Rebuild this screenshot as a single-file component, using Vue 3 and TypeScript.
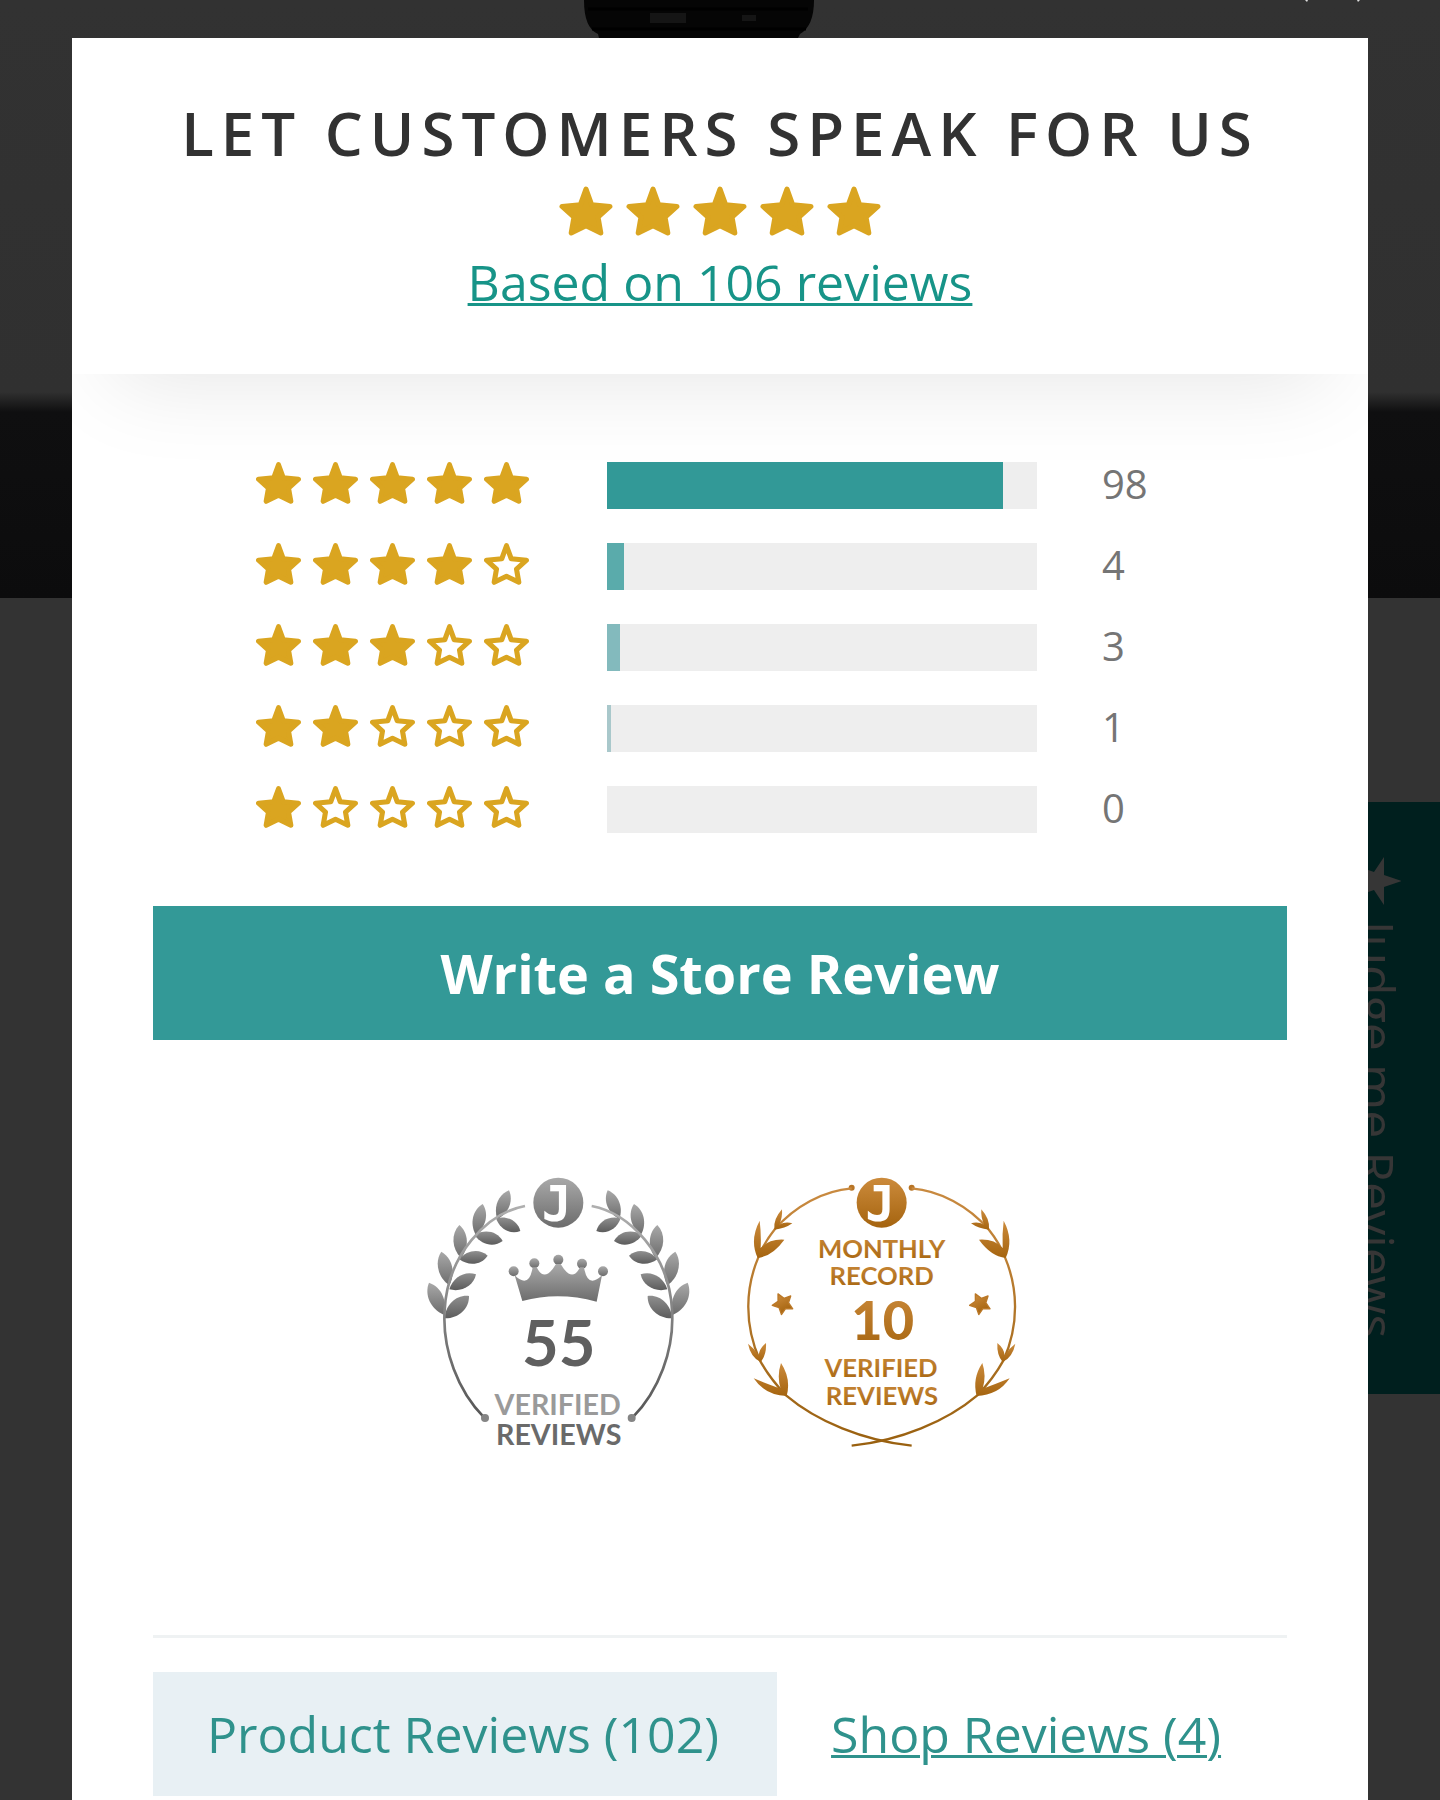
<script setup lang="ts">
interface RatingRow {
  stars: number
  count: number
  color: string
}

const rows: RatingRow[] = [
  { stars: 5, count: 98, color: '#329997' },
  { stars: 4, count: 4, color: '#5aabab' },
  { stars: 3, count: 3, color: '#83babd' },
  { stars: 2, count: 1, color: '#a9c8cb' },
  { stars: 1, count: 0, color: '#cfdfe1' },
]

const total = rows.reduce((sum, row) => sum + row.count, 0)
const percent = (count: number): number => Math.round((count / total) * 100)

const starPoints =
  '26.5,3 32,18.3 50,20 38.3,30.5 41,46 26.5,39 12,46 14.7,30.5 3,20 21,18.3'

type Leaf = [number, number, number, number]

// A pointed leaf that grows from (x1, y1) to (x2, y2).
function leafPath([x1, y1, x2, y2]: Leaf, fat: number): string {
  const dx = x2 - x1
  const dy = y2 - y1
  const at = (t: number, side: number) =>
    `${(x1 + dx * t - dy * side * fat).toFixed(1)} ${(y1 + dy * t + dx * side * fat).toFixed(1)}`
  return `M${x1} ${y1}C${at(0.3, 1)} ${at(0.75, 1)} ${x2} ${y2}C${at(0.75, -1)} ${at(0.3, -1)} ${x1} ${y1}Z`
}

const outerLeaves: Leaf[] = [
  [262, 177, 297, 91],
  [197, 224, 218, 132],
  [153, 294, 148, 195],
  [118, 376, 94, 275],
  [101, 464, 57, 368],
]
const innerLeaves: Leaf[] = [
  [258, 175, 331, 213],
  [194, 225, 278, 243],
  [148, 298, 233, 287],
  [118, 388, 198, 343],
  [104, 475, 177, 408],
]
const sprigs: string[] = [
  'M133 209Q129 178 156 148Q158 170 148 194Q166 184 187 190Q165 206 133 209Z',
  'M83 294Q58 240 89 182Q94 222 92 264Q118 236 163 239Q128 288 83 294Z',
  'M92 606Q62 592 54 551Q74 566 86 586Q88 565 108 549Q110 585 92 606Z',
  'M170 708Q105 706 71 655Q112 672 152 686Q140 648 153 609Q184 656 170 708Z',
]
</script>

<template>
  <div class="page">
    <div class="backdrop" aria-hidden="true">
      <div class="hero">
        <svg class="bottle" viewBox="0 0 230 38">
          <path d="M0 0H230Q230 26 216 34L214 38H15L14 34Q0 28 0 0Z" fill="#050505" />
          <path d="M66 13H102V23H66ZM158 15H172V21H158Z" fill="#151515" />
          <path d="M4 9H224M8 29H222" stroke="#000" stroke-width="3" />
        </svg>
        <svg class="flecks" viewBox="0 0 56 2">
          <path d="M1 0H4L3 2ZM53 0H56L54 2Z" fill="#ddd" />
        </svg>
      </div>
    </div>

    <a class="side-tab" href="#reviews">
      <svg class="side-star" viewBox="0 0 48 48" aria-hidden="true">
        <path d="M49 24 31 30 31 48 21 33 4 39 15 24 4 9 21 15 31 0 31 18Z" />
      </svg>
      <span>Judge me Reviews</span>
    </a>

    <main id="reviews" class="modal">
      <header class="summary">
        <h1>LET CUSTOMERS SPEAK FOR US</h1>
        <div class="stars big" role="img" aria-label="5 out of 5 stars">
          <svg v-for="n in 5" :key="n" class="star full" viewBox="0 0 53 49">
            <polygon :points="starPoints" />
          </svg>
        </div>
        <a class="based" href="#list">Based on {{ total }} reviews</a>
      </header>

      <div class="content">
        <div class="histogram">
          <div v-for="row in rows" :key="row.stars" class="row">
            <div class="stars" role="img" :aria-label="row.stars + ' stars'">
              <svg
                v-for="n in 5"
                :key="n"
                class="star"
                :class="{ full: n <= row.stars }"
                viewBox="0 0 53 49"
              >
                <polygon :points="starPoints" />
              </svg>
            </div>
            <div class="track">
              <div
                class="fill"
                :style="{ width: percent(row.count) + '%', background: row.color }"
              ></div>
            </div>
            <span class="count">{{ row.count }}</span>
          </div>
        </div>

        <button type="button" class="write">Write a Store Review</button>

        <div class="badges">
          <svg class="badge" viewBox="0 0 900 900">
            <defs>
              <linearGradient id="silver" x1="0" y1="0" x2="0" y2="1">
                <stop offset="0" stop-color="#a9a9a9" />
                <stop offset="1" stop-color="#6c6c6c" />
              </linearGradient>
              <linearGradient id="steel" x1="0" y1="0" x2="0" y2="1">
                <stop offset="0" stop-color="#8f8f8f" />
                <stop offset="1" stop-color="#5c5c5c" />
              </linearGradient>
              <linearGradient id="stem" gradientUnits="userSpaceOnUse" x1="0" y1="130" x2="0" y2="780">
                <stop offset="0" stop-color="#b0b0b0" />
                <stop offset="1" stop-color="#555" />
              </linearGradient>
              <g id="laurel">
                <path v-for="(leaf, i) in outerLeaves" :key="'o' + i" :d="leafPath(leaf, 0.27)" fill="url(#silver)" />
                <path v-for="(leaf, i) in innerLeaves" :key="'i' + i" :d="leafPath(leaf, 0.29)" fill="url(#steel)" />
                <path
                  d="M345 138C230 160 112 285 104 450C96 570 145 695 222 772"
                  fill="none"
                  stroke="url(#stem)"
                  stroke-width="8"
                />
                <circle cx="225" cy="774" r="12" fill="#858585" />
              </g>
            </defs>
            <use href="#laurel" />
            <use href="#laurel" transform="translate(890 0) scale(-1 1)" />
            <circle cx="445" cy="128" r="75" fill="url(#silver)" />
            <text class="logo" x="440" y="182">J</text>
            <g fill="url(#silver)">
              <circle cx="311" cy="334" r="15" />
              <circle cx="373" cy="310" r="15" />
              <circle cx="445" cy="299" r="15" />
              <circle cx="516" cy="311" r="15" />
              <circle cx="579" cy="334" r="15" />
              <path
                d="M337 423L314 346Q357 388 368 322H380Q404 370 438 312H452Q486 370 510 322H522Q533 388 576 346L560 425Q445 394 337 423Z"
              />
            </g>
            <text class="number" x="446" y="617" fill="#5f5f5f">55</text>
            <text class="label" x="443" y="765" fill="#9a9a9a">VERIFIED</text>
            <text class="label" x="446" y="854" fill="#6a6a6a">REVIEWS</text>
          </svg>

          <svg class="badge" viewBox="0 0 900 900">
            <defs>
              <linearGradient id="bronze" x1="0" y1="0" x2="0" y2="1">
                <stop offset="0" stop-color="#cc8b3c" />
                <stop offset="1" stop-color="#a5640f" />
              </linearGradient>
              <linearGradient id="wire" gradientUnits="userSpaceOnUse" x1="0" y1="80" x2="0" y2="860">
                <stop offset="0" stop-color="#c98a40" />
                <stop offset="1" stop-color="#99600f" />
              </linearGradient>
              <g id="wreath">
                <circle cx="365" cy="83" r="9" fill="#b87526" />
                <path
                  d="M365 85C280 92 195 138 135 207C112 236 96 262 85 292C48 380 40 490 90 602Q120 656 168 706C260 784 400 842 545 857"
                  fill="none"
                  stroke="url(#wire)"
                  stroke-width="7"
                />
                <path v-for="(sprig, i) in sprigs" :key="i" :d="sprig" fill="url(#bronze)" />
              </g>
              <path
                id="pip"
                d="M0-33 10-13 31-10 16 5 19 27 0 17-19 27-16 5-31-10-10-13Z"
                fill="url(#bronze)"
                stroke="#bb7827"
                stroke-width="4"
                stroke-linejoin="round"
              />
            </defs>
            <use href="#wreath" />
            <use href="#wreath" transform="translate(910 0) scale(-1 1)" />
            <use href="#pip" transform="translate(159 431) rotate(-27)" />
            <use href="#pip" transform="translate(751 431) rotate(-27)" />
            <circle cx="455" cy="128" r="75" fill="url(#bronze)" />
            <text class="logo" x="450" y="182">J</text>
            <text class="label small" x="455" y="293" fill="url(#bronze)">MONTHLY</text>
            <text class="label small" x="455" y="375" fill="url(#bronze)">RECORD</text>
            <text class="number ten" x="458" y="540" fill="url(#bronze)">10</text>
            <text class="label small" x="453" y="652" fill="url(#bronze)">VERIFIED</text>
            <text class="label small" x="456" y="735" fill="url(#bronze)">REVIEWS</text>
          </svg>
        </div>

        <nav id="list" class="tabs">
          <a class="tab active" href="#product-reviews">Product Reviews (102)</a>
          <a class="tab" href="#shop-reviews">Shop Reviews (4)</a>
        </nav>
      </div>
    </main>
  </div>
</template>

<style>
body {
  margin: 0;
  background: #333;
}
</style>

<style scoped>
.page {
  position: relative;
  box-sizing: border-box;
  min-height: 100vh;
  padding: 38px 5% 0;
  display: flex;
  overflow: hidden;
  font-family: 'Open Sans', 'Noto Sans', sans-serif;
}

.backdrop {
  position: absolute;
  inset: 0;
  background: #333;
}

.hero {
  position: relative;
  height: 598px;
  background: linear-gradient(#323232 0, #303030 392px, #0f0f10 412px, #0c0c0d 100%);
}

.bottle {
  position: absolute;
  top: 0;
  left: calc(50% - 136px);
  width: 230px;
  height: 38px;
}

.flecks {
  position: absolute;
  top: 0;
  right: 80px;
  width: 56px;
  height: 2px;
}

.side-tab {
  position: absolute;
  top: 802px;
  right: 0;
  box-sizing: border-box;
  width: 104px;
  height: 592px;
  padding: 55px 22px 0 0;
  display: flex;
  align-items: center;
  gap: 16px;
  writing-mode: vertical-rl;
  background: #001f1e;
  color: #363636;
  font-size: 50px;
  line-height: 64px;
  text-decoration: none;
  white-space: nowrap;
}

.side-star {
  width: 48px;
  height: 48px;
  flex: none;
  fill: #363636;
}

.modal {
  position: relative;
  flex: 1;
  min-width: 0;
  background: #fff;
  overflow: clip;
}

.summary {
  box-sizing: border-box;
  height: 336px;
  padding-top: 55px;
  display: flex;
  flex-direction: column;
  align-items: center;
  background: #fff;
  box-shadow: 0 48px 90px -40px rgba(0, 0, 0, 0.1);
}

h1 {
  margin: 0;
  font-size: 60px;
  line-height: 80px;
  font-weight: 600;
  letter-spacing: 7px;
  color: #323232;
  white-space: nowrap;
}

.stars {
  display: flex;
  gap: 12px;
}

.stars.big {
  gap: 13px;
  margin-top: 13px;
}

.star {
  width: 45px;
  height: 42px;
  fill: none;
  stroke: #daa520;
  stroke-width: 6;
  stroke-linejoin: round;
}

.star.full {
  fill: #daa520;
}

.big .star {
  width: 54px;
  height: 50px;
  stroke-width: 5;
}

.based {
  margin-top: 12px;
  font-size: 50px;
  line-height: 68px;
  color: #179488;
  text-decoration-thickness: 3px;
}

.content {
  padding: 88px 81px 0;
}

.histogram {
  max-width: 928px;
  margin: 0 auto;
  display: grid;
  gap: 34px;
}

.row {
  display: grid;
  grid-template-columns: 286px 1fr 82px;
  column-gap: 65px;
  align-items: start;
}

.track {
  height: 47px;
  background: #eee;
}

.fill {
  height: 100%;
}

.count {
  font-size: 40px;
  line-height: 44px;
  color: #757575;
}

.write {
  display: block;
  width: 100%;
  height: 134px;
  margin-top: 73px;
  padding: 0;
  border: 0;
  background: #339997;
  color: #fff;
  font-family: inherit;
  font-size: 54px;
  font-weight: 700;
}

.badges {
  margin-top: 120px;
  display: flex;
  justify-content: center;
  gap: 20px;
}

.badge {
  width: 300px;
  height: 300px;
}

.label {
  font-family: Lato, sans-serif;
  font-size: 86px;
  font-weight: 700;
  text-anchor: middle;
}

.label.small {
  font-size: 77px;
}

.number {
  font-family: Lato, sans-serif;
  font-size: 190px;
  font-weight: 700;
  text-anchor: middle;
}

.number.ten {
  font-size: 162px;
  font-weight: 900;
}

.logo {
  font-family: 'DejaVu Sans Mono', monospace;
  font-size: 148px;
  font-weight: 700;
  text-anchor: middle;
  fill: #fff;
}

.tabs {
  margin-top: 175px;
  padding-top: 34px;
  display: flex;
  border-top: 3px solid #eff2f3;
}

.tab {
  padding: 28px 58px 28px 54px;
  font-size: 50px;
  line-height: 68px;
  color: #2f928c;
  text-decoration-thickness: 3px;
  white-space: nowrap;
}

.tab.active {
  background: #e8f0f4;
  text-decoration: none;
}
</style>
